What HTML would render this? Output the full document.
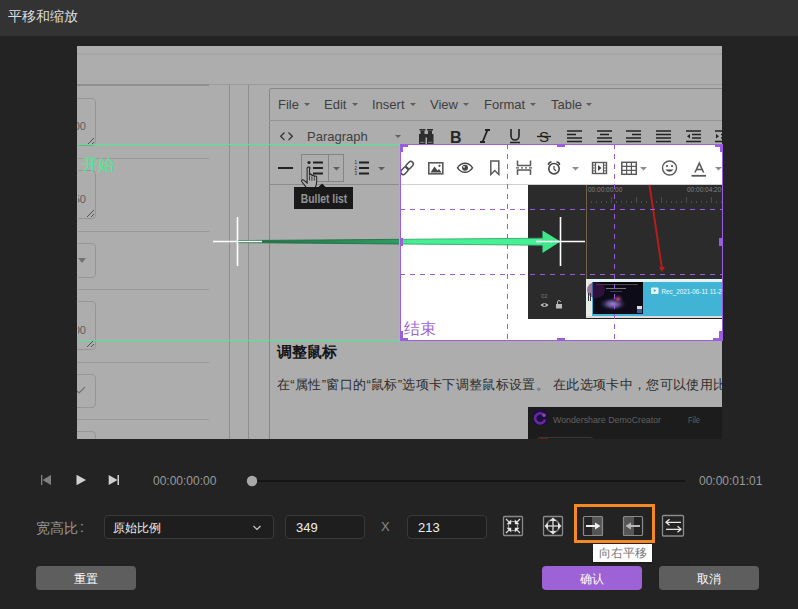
<!DOCTYPE html>
<html><head><meta charset="utf-8">
<style>
*{box-sizing:border-box}
html,body{margin:0;padding:0}
body{width:798px;height:609px;background:#232323;position:relative;overflow:hidden;font-family:"Liberation Sans",sans-serif}
.a{position:absolute}
#title{left:0;top:0;width:798px;height:36px;background:#333333;color:#dcdcdc;font-size:14px;line-height:33px;padding-left:8px}
#preview{left:77px;top:46px;width:645px;height:393px;overflow:hidden;background:#fff}
#inner{left:-77px;top:-46px;width:798px;height:609px}
.ov{position:absolute;background:rgba(0,0,0,0.32)}
</style></head><body>
<div id="title" class="a">平移和缩放</div>
<div id="preview" class="a"><div id="inner" class="a">
<!-- top strip -->
<div class="a" style="left:77px;top:53px;width:646px;height:2px;background:#f5f5f5"></div>
<div class="a" style="left:77px;top:84px;width:646px;height:1px;background:#e6e6e6"></div>
<div class="a" style="left:77px;top:84px;width:132px;height:2px;background:#d4d4d4"></div>
<!-- left form -->
<div class="a" style="left:40px;top:98px;width:56px;height:48px;border:1px solid #dedede;border-radius:4px"></div>
<div class="a" style="left:56px;top:119px;width:30px;font-size:11px;color:#8a8a8a;text-align:right;line-height:14px">00</div>
<svg class="a" style="left:85px;top:136px" width="10" height="10"><path d="M2 9L9 2M6 9L9 6" stroke="#777" stroke-width="1"/></svg>
<div class="a" style="left:77px;top:158px;width:132px;height:1px;background:#e2e2e2"></div>
<div class="a" style="left:40px;top:170px;width:56px;height:49px;border:1px solid #dedede;border-radius:4px"></div>
<div class="a" style="left:56px;top:192px;width:30px;font-size:11px;color:#8a8a8a;text-align:right;line-height:14px">50</div>
<svg class="a" style="left:85px;top:208px" width="10" height="10"><path d="M2 9L9 2M6 9L9 6" stroke="#777" stroke-width="1"/></svg>
<div class="a" style="left:77px;top:231px;width:132px;height:1px;background:#e2e2e2"></div>
<div class="a" style="left:40px;top:243px;width:56px;height:35px;border:1px solid #dedede;border-radius:4px"></div>
<svg class="a" style="left:77px;top:258px" width="10" height="6"><path d="M1 0H9L5 5Z" fill="#a8a8a8"/></svg>
<div class="a" style="left:77px;top:289px;width:132px;height:1px;background:#e2e2e2"></div>
<div class="a" style="left:40px;top:301px;width:56px;height:49px;border:1px solid #dedede;border-radius:4px"></div>
<div class="a" style="left:56px;top:323px;width:30px;font-size:11px;color:#8a8a8a;text-align:right;line-height:14px">00</div>
<svg class="a" style="left:85px;top:338px" width="10" height="10"><path d="M2 9L9 2M6 9L9 6" stroke="#777" stroke-width="1"/></svg>
<div class="a" style="left:77px;top:362px;width:132px;height:1px;background:#e2e2e2"></div>
<div class="a" style="left:40px;top:374px;width:56px;height:34px;border:1px solid #dedede;border-radius:4px"></div>
<svg class="a" style="left:75px;top:386px" width="12" height="9"><path d="M1 4L4 7L10 1" stroke="#aaa" stroke-width="1.2" fill="none"/></svg>
<div class="a" style="left:77px;top:419px;width:132px;height:1px;background:#e2e2e2"></div>
<div class="a" style="left:40px;top:431px;width:56px;height:34px;border:1px solid #dedede;border-radius:4px"></div>
<!-- vertical lines -->
<div class="a" style="left:229px;top:85px;width:1px;height:360px;background:#d2d2d2"></div>
<div class="a" style="left:248px;top:85px;width:1px;height:360px;background:#d2d2d2"></div>
<!-- editor frame -->
<div class="a" style="left:269px;top:88px;width:470px;height:360px;border:1px solid #c8c8c8;border-radius:2px"></div>
<div class="a" style="left:269px;top:120px;width:460px;height:1px;background:#dadada"></div>
<div class="a" style="left:269px;top:184px;width:460px;height:1px;background:#cfcfcf"></div>

<!-- menubar -->
<div class="a" style="left:0;top:0;font-size:13px;color:#5e5e5e;line-height:15px">
<span class="a" style="left:278px;top:97px">File</span>
<span class="a" style="left:324px;top:97px">Edit</span>
<span class="a" style="left:372px;top:97px">Insert</span>
<span class="a" style="left:430px;top:97px">View</span>
<span class="a" style="left:484px;top:97px">Format</span>
<span class="a" style="left:551px;top:97px">Table</span>
<span class="a" style="left:307px;top:129px">Paragraph</span>
</div>
<svg class="a" style="left:0;top:0" width="798" height="200">
<g fill="#8c8c8c">
<path d="M304 103h6l-3 3z"/><path d="M352 103h6l-3 3z"/><path d="M410 103h6l-3 3z"/><path d="M463 103h6l-3 3z"/><path d="M530 103h6l-3 3z"/><path d="M586 103h6l-3 3z"/>
<path d="M395 135h6l-3 3z"/>
<path d="M333 167h7l-3.5 3.5z"/><path d="M378 167h7l-3.5 3.5z"/>
<path d="M572 167h7l-3.5 3.5z"/><path d="M640 167h7l-3.5 3.5z"/><path d="M715 167h7l-3.5 3.5z"/>
</g>
<!-- code <> -->
<path d="M284.5 132.5l-3.8 3.8 3.8 3.8M288.5 132.5l3.8 3.8-3.8 3.8" stroke="#4a4a4a" stroke-width="1.3" fill="none"/>
<!-- binoculars -->
<g fill="#444"><rect x="419.5" y="129" width="6" height="1.5"/><rect x="427" y="129" width="6" height="1.5"/><rect x="420.5" y="130.5" width="4" height="3.5"/><rect x="428" y="130.5" width="4" height="3.5"/><rect x="419" y="134" width="6.5" height="10"/><rect x="427" y="134" width="6.5" height="10"/><rect x="425" y="134" width="2" height="3.5"/></g><path d="M420 142.3h4.5M428 142.3h4.5" stroke="#ddd" stroke-width="0.8"/>
<!-- B I U S -->
<text x="450" y="142.5" font-family="Liberation Sans" font-weight="bold" font-size="16" fill="#3a3a3a">B</text>
<path d="M485 130h5M480 142h5M487.5 130l-5 12" stroke="#333" stroke-width="1.8" fill="none"/>
<path d="M511 129v7a4 4 0 0 0 8 0v-7M510 142.5h10" stroke="#333" stroke-width="1.6" fill="none"/>
<text x="539" y="142" font-family="Liberation Sans" font-size="15" fill="#333">S</text>
<path d="M537 136.5h14" stroke="#333" stroke-width="1.4"/>
<!-- align -->
<g stroke="#333" stroke-width="1.6">
<path d="M567 131h15M567 134.5h9M567 138h15M567 141.5h15"/>
<path d="M597 131h15M600 134.5h9M597 138h15M597 141.5h15"/>
<path d="M626 131h15M632 134.5h9M626 138h15M626 141.5h15"/>
<path d="M656 131h15M656 134.5h15M656 138h15M656 141.5h15"/>
<path d="M686 131h15M692 134.5h9M692 138h9M686 141.5h15"/>
<path d="M715 131h15M721 134.5h9M721 138h9M715 141.5h15"/>
</g>
<path d="M690 134l-3 2.3 3 2.3z" fill="#333"/><path d="M716 134l3 2.3-3 2.3z" fill="#333"/>
<!-- row3 hr -->
<path d="M278 168h15" stroke="#333" stroke-width="2"/>
<!-- bullet button -->
<rect x="301.5" y="154.5" width="42" height="27" fill="none" stroke="#c4c4c4"/>
<path d="M328.5 155v26" stroke="#c4c4c4"/>
<g fill="#333"><circle cx="309" cy="162.5" r="1.6"/><circle cx="309" cy="168" r="1.6"/><circle cx="309" cy="173.5" r="1.6"/></g>
<path d="M313 162.5h10M313 168h10M313 173.5h10" stroke="#333" stroke-width="1.8"/>
<!-- numlist -->
<path d="M359 162.5h10M359 168h10M359 173.5h10" stroke="#333" stroke-width="1.8"/>
<g font-family="Liberation Sans" font-size="4.5" fill="#333"><text x="354.5" y="164">1</text><text x="354.5" y="169.5">2</text><text x="354.5" y="175">3</text></g>
</svg>

<!-- row3 bright icons -->
<svg class="a" style="left:0;top:0" width="798" height="200">
<!-- link -->
<g transform="translate(407,168) rotate(-47)" fill="none" stroke="#505050" stroke-width="1.5"><rect x="-8" y="-2.5" width="8.5" height="5" rx="2.5"/><rect x="-0.5" y="-2.5" width="8.5" height="5" rx="2.5"/></g>
<!-- image -->
<rect x="428.8" y="162.8" width="14" height="11" fill="none" stroke="#5a5a5a" stroke-width="1.6"/>
<path d="M430.5 172.5l4-6 3 4 1.5-1.5 2.5 3.5z" fill="#454545"/><circle cx="439.5" cy="165.8" r="1.1" fill="#454545"/>
<!-- eye -->
<path d="M457.5 167.8c4-6 11-6 15 0c-4 6-11 6-15 0z" fill="none" stroke="#454545" stroke-width="1.4"/>
<circle cx="465" cy="167.8" r="3" fill="#454545"/><circle cx="464" cy="166.8" r="0.9" fill="#fff"/>
<!-- bookmark -->
<path d="M490.8 161v13.5l4-4 4 4v-13.5z" fill="none" stroke="#5a5a5a" stroke-width="1.5"/>
<!-- pagebreak -->
<path d="M517.5 160.5v5h13v-5M517.5 175v-5h13v5" fill="none" stroke="#5a5a5a" stroke-width="1.5"/>
<path d="M516 167.8h3M521 167.8h2M525 167.8h2M529 167.8h3" stroke="#5a5a5a" stroke-width="1.3"/>
<!-- clock -->
<circle cx="554" cy="168.7" r="5.2" fill="none" stroke="#454545" stroke-width="1.6"/>
<path d="M554 166v3l2 2" fill="none" stroke="#454545" stroke-width="1.2"/>
<path d="M548.5 165a3 3 0 0 1 3-3M559.5 165a3 3 0 0 0 -3-3" fill="none" stroke="#454545" stroke-width="1.6"/>
<!-- media -->
<rect x="592.5" y="162.5" width="14" height="11" fill="none" stroke="#5a5a5a" stroke-width="1.4"/>
<path d="M595.5 162.5v11M603.5 162.5v11" stroke="#5a5a5a" stroke-width="1.2"/>
<path d="M592.5 165.2h3M592.5 168h3M592.5 170.8h3M603.5 165.2h3M603.5 168h3M603.5 170.8h3" stroke="#5a5a5a" stroke-width="1"/>
<path d="M598 165v6l3.5-3z" fill="#454545"/>
<!-- table -->
<rect x="621.8" y="162.3" width="14.5" height="12" fill="none" stroke="#5a5a5a" stroke-width="1.5"/>
<path d="M621.8 166.3h14.5M621.8 170.3h14.5M626.6 162.3v12M631.4 162.3v12" stroke="#5a5a5a" stroke-width="1.2"/>
<!-- emoji -->
<circle cx="669.5" cy="168" r="7" fill="none" stroke="#5a5a5a" stroke-width="1.4"/>
<circle cx="667" cy="166" r="1" fill="#454545"/><circle cx="672" cy="166" r="1" fill="#454545"/>
<path d="M665.5 169.5q4 4.5 8 0z" fill="#454545"/>
<!-- A -->
<path d="M695 172.5l4.3-9.3 4.3 9.3M696.5 169.5h5.6" fill="none" stroke="#5a5a5a" stroke-width="1.6"/>
<path d="M691.5 175.8h14.5" stroke="#5a5a5a" stroke-width="1.8"/>
<!-- hand cursor -->
<g transform="translate(301.5,167) scale(0.8)">
<path d="M7 1.5c0-2 3-2 3 0v9c0-1.8 3-1.8 3 0v1c0-1.8 3-1.8 3 0v1c0-1.8 3-1.8 3 0v6c0 4-1.5 6.5-2.5 9h-9.5c-1-2.5-4-5.5-6.5-9c-1.2-1.8 1.2-3.5 2.8-1.8l3.7 3.5z" fill="#fff" stroke="#333" stroke-width="1.3"/>
<path d="M10 11v6M13 12v5M16 13v4" stroke="#333" stroke-width="1"/>
</g>
<!-- tooltip -->
<path d="M318 187.5l4-4 4 4z" fill="#222"/>
</svg>
<div class="a" style="left:294px;top:187px;width:59px;height:22px;background:#262626"></div><div class="a" style="left:273.5px;top:187px;width:100px;height:22px;color:#d8d8d8;font-size:12px;font-weight:bold;line-height:25px;text-align:center;transform:scaleX(0.86)">Bullet list</div>
<!-- body text -->
<div class="a" style="left:277px;top:342px;font-size:15px;font-weight:bold;color:#222;line-height:20px;white-space:nowrap">调整鼠标</div>
<div class="a" style="left:277px;top:376px;font-size:13px;letter-spacing:0.34px;color:#444;line-height:17px;white-space:nowrap">在“属性”窗口的“鼠标”选项卡下调整鼠标设置。 在此选项卡中，您可以使用比例缩放</div>

<!-- video editor screenshot -->
<div class="a" style="left:528px;top:185px;width:200px;height:134px;background:#2b2b2b"></div>
<div class="a" style="left:586px;top:185px;width:1px;height:134px;background:#6e6446"></div>
<svg class="a" style="left:0;top:0" width="798" height="340">
<g font-family="Liberation Sans" font-size="6.5" fill="#858585">
<text x="588" y="191.5">00:00:00:00</text><text x="687" y="191.5">00:00:04:20</text>
</g>
<g stroke="#4c4c4c" stroke-width="1">
<path d="M611.5 197v6M636.5 197v6M661.5 197v6M686.5 197v6M711.5 197v6"/>
<path d="M591.5 201v2M596.5 201v2M601.5 201v2M606.5 201v2M616.5 201v2M621.5 201v2M626.5 201v2M631.5 201v2M641.5 201v2M646.5 201v2M651.5 201v2M656.5 201v2M666.5 201v2M671.5 201v2M676.5 201v2M681.5 201v2M691.5 201v2M696.5 201v2M701.5 201v2M706.5 201v2M716.5 201v2M721.5 201v2"/>
</g>
<path d="M649.5 185L662 269" stroke="#b81c1c" stroke-width="2"/>
<path d="M659 267h6l-3 5z" fill="#b81c1c"/>
<!-- clip -->
<defs>
<radialGradient id="gx" cx="0.5" cy="0.5" r="0.5"><stop offset="0" stop-color="#9a88c8"/><stop offset="0.45" stop-color="#5a4a8a"/><stop offset="1" stop-color="#140f22" stop-opacity="0"/></radialGradient>
<radialGradient id="gp" cx="0.5" cy="0.5" r="0.5"><stop offset="0" stop-color="#c05a8a"/><stop offset="1" stop-color="#2a1030" stop-opacity="0"/></radialGradient>
</defs>
<rect x="586" y="279" width="140" height="39" fill="#e4f2f6"/>
<rect x="592" y="282" width="134" height="34" fill="#41b4d6"/>
<rect x="587" y="280" width="5" height="37" fill="#eeebdc"/>
<rect x="588" y="293" width="1" height="8" fill="#333"/><rect x="590" y="293" width="1" height="8" fill="#333"/>
<rect x="593" y="282" width="50" height="32" fill="#0e0b18"/>
<rect x="593" y="282" width="50" height="3" fill="#050505"/>
<rect x="596" y="284" width="42" height="0.8" fill="#aaa" opacity="0.5"/>
<ellipse cx="596" cy="290" rx="9" ry="8" fill="#4a1a5a" opacity="0.55"/>
<ellipse cx="613" cy="304" rx="14" ry="7" fill="url(#gx)"/>
<ellipse cx="618" cy="299" rx="6" ry="5" fill="url(#gp)"/>
<rect x="606" y="288" width="20" height="1" fill="#ccc" opacity="0.55"/>
<rect x="610" y="291" width="12" height="0.7" fill="#a0a0c0" opacity="0.5"/>
<rect x="637" y="306" width="5" height="3" fill="#ddd"/><rect x="637" y="309" width="5" height="4" fill="#3a5aa8"/>
<rect x="586" y="316" width="140" height="2" fill="#dcdcdc"/>
<rect x="586" y="318" width="140" height="1" fill="#222"/>
<rect x="651" y="287.5" width="7.5" height="6.5" rx="1" fill="#eaf6fb"/><path d="M653.8 289v3.2l2.6-1.6z" fill="#41b4d6"/>
<text x="661.5" y="293.5" font-family="Liberation Sans" font-size="6.3" fill="#f0f8ff">Rec_2021-06-11 11-2</text>
<text x="541" y="298" font-family="Liberation Sans" font-size="6" fill="#777">02</text>
<path d="M540.5 305c2-2.5 6-2.5 8 0c-2 2.5-6 2.5-8 0z" fill="#bbb"/><circle cx="544.5" cy="305" r="1.2" fill="#2b2b2b"/>
<rect x="556" y="304" width="6" height="4.5" fill="#bbb"/><path d="M557.5 304v-2a1.5 1.5 0 0 1 3 0" fill="none" stroke="#bbb" stroke-width="1"/>
</svg>
<!-- democreator inset -->
<div class="a" style="left:528px;top:407px;width:200px;height:40px;background:#2a2a2a"></div>
<svg class="a" style="left:0;top:0" width="798" height="445">
<rect x="533" y="410" width="15" height="15" rx="3.5" fill="#2c1666"/>
<path d="M543 414.2A5 5 0 1 0 545 419.5" fill="none" stroke="#9a3ee0" stroke-width="2.6"/>
<circle cx="544" cy="415.2" r="1.8" fill="#c878d8"/>
<text x="553" y="423" font-family="Liberation Sans" font-size="8.9" fill="#8c8c8c" textLength="108" lengthAdjust="spacingAndGlyphs">Wondershare DemoCreator</text>
<text x="688" y="423" font-family="Liberation Sans" font-size="8.9" fill="#8c8c8c" textLength="12" lengthAdjust="spacingAndGlyphs">File</text>
<rect x="537.5" y="437.5" width="55" height="10" rx="2" fill="none" stroke="#555"/>
<rect x="540" y="438" width="8" height="4" fill="#aa2222"/>
</svg>
<!-- green arrow (under overlay) -->
<svg class="a" style="left:0;top:0" width="798" height="445">
<defs><linearGradient id="sg" gradientUnits="userSpaceOnUse" x1="237" y1="0" x2="420" y2="0"><stop offset="0" stop-color="#33a068"/><stop offset="1" stop-color="#46f094"/></linearGradient></defs><path d="M237 240.6L543 238.2L543 245.2L237 242.6Z" fill="url(#sg)" stroke="#36a86b" stroke-width="0.9"/>
<path d="M542.5 230.5L560.5 241.6L542.5 253Z" fill="#3fe48b"/>
</svg>

<!-- CONTENT -->
<!-- OVERLAY -->
<div class="ov" style="left:77px;top:46px;width:646px;height:98px"></div>
<div class="ov" style="left:77px;top:341px;width:646px;height:98px"></div>
<div class="ov" style="left:77px;top:144px;width:323px;height:197px"></div>


<!-- TOP -->
</div></div>
<svg class="a" style="left:0;top:440px" width="798" height="169">
<g transform="translate(0,-440)">
<!-- transport -->
<rect x="41" y="475" width="1.3" height="10" fill="#808080"/>
<path d="M42.5 480L51 475V485Z" fill="#808080"/>
<path d="M76.5 474.8L86 480L76.5 485.2Z" fill="#d0d0d0"/>
<path d="M108.7 475L117.5 480L108.7 485Z" fill="#d0d0d0"/>
<rect x="117.5" y="475" width="1.5" height="10" fill="#d0d0d0"/>
<!-- slider -->
<rect x="252" y="480" width="433" height="2" fill="#151515"/>
<circle cx="252" cy="481" r="5.2" fill="#a8a8a8"/>
<!-- icon boxes -->
<g fill="none" stroke="#8a8a8a" stroke-width="1.3">
<rect x="503.5" y="516.5" width="19" height="19" rx="1"/>
<rect x="543.5" y="516.5" width="19" height="19" rx="1"/>
<rect x="662.5" y="515.5" width="21" height="20.5" rx="1"/>
</g>
<!-- fit icon -->
<g transform="translate(513,526)">
<g transform="scale(1,1)"><path d="M-7 -7L-3.5 -3.5" stroke="#d8d8d8" stroke-width="1.3"/><path d="M-1.8 -1.8V-6.5L-6.5 -1.8Z" fill="#e8e8e8"/></g>
<g transform="scale(-1,1)"><path d="M-7 -7L-3.5 -3.5" stroke="#d8d8d8" stroke-width="1.3"/><path d="M-1.8 -1.8V-6.5L-6.5 -1.8Z" fill="#e8e8e8"/></g>
<g transform="scale(1,-1)"><path d="M-7 -7L-3.5 -3.5" stroke="#d8d8d8" stroke-width="1.3"/><path d="M-1.8 -1.8V-6.5L-6.5 -1.8Z" fill="#e8e8e8"/></g>
<g transform="scale(-1,-1)"><path d="M-7 -7L-3.5 -3.5" stroke="#d8d8d8" stroke-width="1.3"/><path d="M-1.8 -1.8V-6.5L-6.5 -1.8Z" fill="#e8e8e8"/></g>
<path d="M-2 -4.5H2M-2 4.5H2M-4.5 -2V2M4.5 -2V2" stroke="#9a9a9a" stroke-width="1.2"/>
</g>
<!-- move icon -->
<circle cx="553" cy="526" r="6.3" fill="none" stroke="#747474" stroke-width="1.8"/>
<path d="M553 519.5v13M546.5 526h13" stroke="#c8c8c8" stroke-width="1.5"/>
<g fill="#e4e4e4"><path d="M553 517.5l-3.5 3.5h7z"/><path d="M553 534.5l-3.5-3.5h7z"/><path d="M544.5 526l3.5-3.5v7z"/><path d="M561.5 526l-3.5-3.5v7z"/></g>
<!-- orange box -->
<rect x="575.5" y="505.5" width="78" height="36" fill="none" stroke="#f58a24" stroke-width="3"/>
<!-- pan right -->
<rect x="592" y="517" width="11" height="19" fill="#555"/>
<rect x="583.5" y="516.5" width="19" height="19" rx="1" fill="none" stroke="#8a8a8a" stroke-width="1.2"/>
<path d="M586 526h10" stroke="#f0f0f0" stroke-width="2"/><path d="M595 522.5L600.5 526L595 529.5z" fill="#f0f0f0"/>
<!-- pan left -->
<rect x="623" y="517" width="11" height="19" fill="#555"/>
<rect x="623.5" y="516.5" width="19" height="19" rx="1" fill="none" stroke="#8a8a8a" stroke-width="1.2"/>
<path d="M630 526h10" stroke="#b8b8b8" stroke-width="2"/><path d="M631 522.5L625.5 526L631 529.5z" fill="#b8b8b8"/>
<!-- swap -->
<path d="M666 522.3h15M666 529.3h15" stroke="#e6e6e6" stroke-width="1.3"/>
<path d="M669.5 519.3l-3.5 3 3.5 3M677.5 526.3l3.5 3-3.5 3" stroke="#e6e6e6" stroke-width="1.3" fill="none"/>
</g>
</svg>
<div class="a" style="left:153px;top:473px;font-size:12px;color:#9a9a9a;line-height:16px">00:00:00:00</div>
<div class="a" style="left:699px;top:473px;font-size:12px;color:#9a9a9a;line-height:16px">00:00:01:01</div>
<div class="a" style="left:36px;top:520px;font-size:14px;color:#9a9a9a;line-height:16px">宽高比</div><div class="a" style="left:80px;top:519px;font-size:14px;color:#9a9a9a;line-height:16px">:</div>
<div class="a" style="left:104px;top:515px;width:170px;height:24px;border:1px solid #393939;border-radius:4px;background:#1e1e1e"></div>
<div class="a" style="left:113px;top:520px;font-size:12px;color:#eee;line-height:16px">原始比例</div>
<svg class="a" style="left:252px;top:523.5px" width="10" height="8"><path d="M1.5 2L5 5.5L8.5 2" fill="none" stroke="#ccc" stroke-width="1.2"/></svg>
<div class="a" style="left:285px;top:515px;width:80px;height:24px;border:1px solid #393939;border-radius:4px;background:#1e1e1e"></div>
<div class="a" style="left:296px;top:520px;font-size:13px;color:#eee;line-height:16px">349</div>
<div class="a" style="left:381px;top:519px;font-size:13px;color:#8a8a8a;line-height:16px">X</div>
<div class="a" style="left:407px;top:515px;width:80px;height:24px;border:1px solid #393939;border-radius:4px;background:#1e1e1e"></div>
<div class="a" style="left:418px;top:520px;font-size:13px;color:#eee;line-height:16px">213</div>
<!-- tooltip -->
<div class="a" style="left:593px;top:544px;width:59px;height:18px;background:#fff;color:#777;font-size:12px;line-height:18px;text-align:center;box-shadow:0 1px 2px rgba(0,0,0,0.3)">向右平移</div>
<!-- buttons -->
<div class="a" style="left:36px;top:566px;width:100px;height:24px;border-radius:4px;background:#5e5e5e;color:#fff;font-size:12px;line-height:26px;text-align:center">重置</div>
<div class="a" style="left:542px;top:566px;width:100px;height:24px;border-radius:4px;background:#9d62d6;color:#fff;font-size:12px;line-height:26px;text-align:center">确认</div>
<div class="a" style="left:659px;top:566px;width:100px;height:24px;border-radius:4px;background:#5e5e5e;color:#fff;font-size:12px;line-height:26px;text-align:center">取消</div>

<!-- TOPLAYER -->
<svg class="a" style="left:0;top:0" width="798" height="445">
<!-- green rect -->
<rect x="77.5" y="144.5" width="322" height="196" fill="none" stroke="#48ec90" stroke-width="1"/>
<text x="82" y="170" font-size="16" fill="#48ec90" font-family="Liberation Sans">开始</text>
<!-- purple thirds -->
<g stroke="#9b5de0" stroke-width="1" stroke-dasharray="5 5">
<path d="M400 209.5H722M400 274.5H722M507.5 144V340M614.5 144V340"/>
</g>
<rect x="400.5" y="144.5" width="322" height="196" fill="none" stroke="#9b5de0" stroke-width="1"/>
<g fill="#9b5de0">
<path d="M400 144h8v3h-5v5h-3z"/>
<path d="M723 144h-8v3h5v5h3z"/>
<path d="M400 341h8v-3h-5v-7h-3z"/>
<path d="M723 341h-10v-3h6v-7h4z"/>
<rect x="557" y="144" width="8" height="3"/>
<rect x="557" y="338" width="8" height="3"/>
<rect x="400" y="238" width="3" height="8"/>
<rect x="719" y="238" width="4" height="8"/>
</g>
<text x="404" y="334" font-size="16" fill="#a066d8" font-family="Liberation Sans">结束</text>
<!-- crosshairs -->
<g stroke="#fff" stroke-width="1.6">
<path d="M213 241.5H262M237.5 217V266"/>
<path d="M536 241.5H585M560.5 217V266"/>
</g>
</svg>
<!-- CONTROLS -->
</body></html>
